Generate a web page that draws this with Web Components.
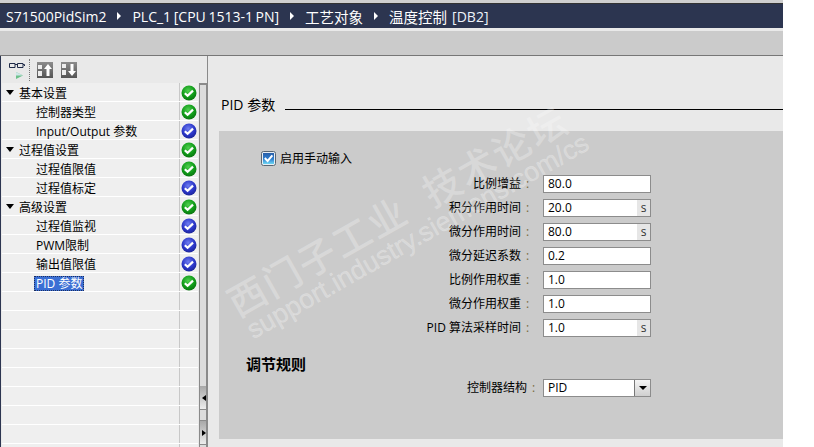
<!DOCTYPE html>
<html>
<head>
<meta charset="utf-8">
<style>
    html, body { margin: 0; padding: 0; background: #fff; }
    body { font-family: "Open Sans", "Noto Sans CJK SC", sans-serif; font-size: 12px; color: #000; }
    tia-window { width: 783px; height: 447px; }
</style>
</head>
<body>
<tia-window></tia-window>

<script>
const cjk = '"Open Sans", "Noto Sans CJK SC", sans-serif';

class StatusIcon extends HTMLElement {
    connectedCallback() {
        const color = this.getAttribute('color') === 'blue'
            ? ['#6f7df0', '#2a35c8', '#1b2390']
            : ['#4fd04f', '#0f9a18', '#0b6e10'];
        const id = 'g' + color[1].slice(1);
        this.attachShadow({ mode: 'open' }).innerHTML = /* html */ `
        <style>
            :host { display: block; width: 16px; height: 16px; }
            svg { display: block; }
        </style>
        <svg width="16" height="16" viewBox="0 0 16 16">
            <defs>
                <radialGradient id="${id}" cx="45%" cy="35%" r="70%">
                    <stop offset="0" stop-color="${color[0]}"/>
                    <stop offset="0.6" stop-color="${color[1]}"/>
                    <stop offset="1" stop-color="${color[2]}"/>
                </radialGradient>
            </defs>
            <circle cx="8" cy="8" r="7.5" fill="url(#${id})"/>
            <path d="M3.8 8.2 L6.6 10.8 L12 5.6" fill="none" stroke="#fff" stroke-width="2.2"/>
        </svg>`;
    }
}
customElements.define('status-icon', StatusIcon);

class TreeRow extends HTMLElement {
    connectedCallback() {
        const level = this.getAttribute('level');
        const status = this.getAttribute('status');
        const selected = this.hasAttribute('selected');
        this.attachShadow({ mode: 'open' }).innerHTML = /* html */ `
        <style>
            :host { display: flex; height: 18px; border-bottom: 1px solid #fff; background: #efefef; }
            .name {
                width: 177px;
                display: flex;
                align-items: center;
                box-sizing: border-box;
                padding-left: ${level === '0' ? 4 : level === '1' ? 33 : 0}px;
                padding-top: 3px;
                line-height: 15px;
                white-space: nowrap;
            }
            .arrow {
                width: 0; height: 0;
                border-left: 4px solid transparent;
                border-right: 4px solid transparent;
                border-top: 5px solid #000;
                margin-right: 4px;
                margin-top: -3px;
            }
            .label { padding: 0 1px; }
            .selected {
                background: #3b6fd4;
                color: #fff;
                outline: 1px dotted #1c2f60;
                outline-offset: -1px;
                padding: 0 2px;
                margin-left: -1px;
            }
            .status {
                width: 19px;
                border-left: 1px solid #c8c8c8;
                box-sizing: border-box;
                padding: 2px 0 0 1px;
            }
        </style>
        <div class="name">
            ${level === '0' ? '<span class="arrow"></span>' : ''}
            <span class="label ${selected ? 'selected' : ''}"><slot></slot></span>
        </div>
        <div class="status">${status ? `<status-icon color="${status}"></status-icon>` : ''}</div>`;
    }
}
customElements.define('tree-row', TreeRow);

const treeRows = [
    ['0', 'green', '基本设置'],
    ['1', 'green', '控制器类型'],
    ['1', 'blue', 'Input/Output 参数'],
    ['0', 'green', '过程值设置'],
    ['1', 'green', '过程值限值'],
    ['1', 'blue', '过程值标定'],
    ['0', 'green', '高级设置'],
    ['1', 'blue', '过程值监视'],
    ['1', 'blue', 'PWM限制'],
    ['1', 'blue', '输出值限值'],
    ['1', 'green', 'PID 参数', true],
];

class SideTree extends HTMLElement {
    constructor() {
        super();
        const shadow = this.attachShadow({ mode: 'open' });
        shadow.innerHTML = /* html */ `
        <style>
            :host { display: flex; width: 206px; height: 364px; overflow: hidden; }
            .rows { width: 196px; margin-left: 1px; }
            .track {
                width: 7px;
                margin-left: 1px;
                box-sizing: content-box;
                border-left: 1px solid #8a8a8a;
                border-right: 1px solid #8a8a8a;
                border-top: 2px solid #8a8a8a;
                background: #dcdcdc;
                margin-right: 0;
            }
            .btn {
                height: 23px;
                background: linear-gradient(#a8a8a8, #ededed);
                border-bottom: 1px solid #8a8a8a;
                display: flex;
                align-items: center;
            }
            .btn i { display: block; width: 0; height: 0; border-top: 3px solid transparent; border-bottom: 3px solid transparent; margin-left: 2px; }
            .prev { margin-top: 301px; }
            .prev i { border-right: 4px solid #000; }
            .next { margin-top: 10px; border-top: 1px solid #8a8a8a; }
            .next i { border-left: 4px solid #000; }
        </style>
        <div class="rows"></div>
        <div class="track">
            <div class="btn prev"><i></i></div>
            <div class="btn next"><i></i></div>
        </div>`;

        const rows = shadow.querySelector('.rows');
        for (let i = 0; i < 20; i++) {
            const row = document.createElement('tree-row');
            const item = treeRows[i];
            row.setAttribute('level', item ? item[0] : '2');
            if (item) {
                row.setAttribute('status', item[1]);
                row.textContent = item[2];
                if (item[3]) row.setAttribute('selected', '');
            }
            rows.appendChild(row);
        }
    }
}
customElements.define('side-tree', SideTree);

class FormField extends HTMLElement {
    connectedCallback() {
        const unit = this.getAttribute('unit');
        const value = this.getAttribute('value');
        const kind = this.getAttribute('kind');
        const isSelect = kind === 'select';
        this.attachShadow({ mode: 'open' }).innerHTML = /* html */ `
        <style>
            :host { display: flex; height: 18px; margin-bottom: 6px; line-height: 18px; }
            .label { width: ${isSelect ? 308 : 302}px; text-align: right; white-space: nowrap; }
            .colon { width: ${isSelect ? 16 : 22}px; padding-left: 5px; box-sizing: border-box; color: #7a6a40; }
            .box {
                width: 108px;
                height: 18px;
                box-sizing: border-box;
                background: #fff;
                border: 1px solid #8c8c8c;
                display: flex;
                line-height: 16px;
            }
            .value { flex: 1; padding-left: 4px; }
            .unit { width: 13px; background: #e6e6e6; text-align: center; color: #333; }
            .drop {
                width: 15px;
                border-left: 1px solid #777;
                background: linear-gradient(#f4f4f4, #cfcfcf);
                display: flex;
                align-items: center;
                justify-content: center;
            }
            .drop i { display: block; width: 0; height: 0; border-left: 4px solid transparent; border-right: 4px solid transparent; border-top: 4px solid #000; }
        </style>
        <div class="label"><slot></slot></div>
        <div class="colon">:</div>
        <div class="box">
            <div class="value">${value}</div>
            ${unit ? `<div class="unit">${unit}</div>` : ''}
            ${isSelect ? '<div class="drop"><i></i></div>' : ''}
        </div>`;
    }
}
customElements.define('form-field', FormField);

class CheckField extends HTMLElement {
    constructor() {
        super();
        this.attachShadow({ mode: 'open' }).innerHTML = /* html */ `
        <style>
            :host { display: flex; align-items: center; gap: 4px; height: 15px; margin-left: 42px; line-height: 15px; }
            svg { display: block; }
        </style>
        <svg width="15" height="15" viewBox="0 0 15 15">
            <defs>
                <linearGradient id="fill" x1="0" y1="0" x2="0" y2="1">
                    <stop offset="0" stop-color="#2a5fa8"/>
                    <stop offset="0.55" stop-color="#2f7fd0"/>
                    <stop offset="1" stop-color="#6fd8f4"/>
                </linearGradient>
            </defs>
            <rect x="0.5" y="0.5" width="14" height="14" rx="2" fill="#e8eef4" stroke="#5a6672"/>
            <rect x="2" y="2" width="11" height="11" fill="url(#fill)"/>
            <path d="M3.8 7 L6.6 10 L11.4 4.4" fill="none" stroke="#fff" stroke-width="2"/>
        </svg>
        <span><slot></slot></span>`;
    }
}
customElements.define('check-field', CheckField);

class PidPanel extends HTMLElement {
    constructor() {
        super();
        this.attachShadow({ mode: 'open' }).innerHTML = /* html */ `
        <style>
            :host { display: block; width: 565px; height: 308px; margin-left: 11px; background: #cbcbcb; box-sizing: border-box; padding-top: 20px; }
            .fields { margin-top: 9px; }
            h3 { margin: 18px 0 6px 27px; font-size: 15px; line-height: 18px; height: 18px; font-weight: 700; }
        </style>
        <check-field>启用手动输入</check-field>
        <div class="fields">
            <form-field value="80.0">比例增益</form-field>
            <form-field value="20.0" unit="s">积分作用时间</form-field>
            <form-field value="80.0" unit="s">微分作用时间</form-field>
            <form-field value="0.2">微分延迟系数</form-field>
            <form-field value="1.0">比例作用权重</form-field>
            <form-field value="1.0">微分作用权重</form-field>
            <form-field value="1.0" unit="s">PID 算法采样时间</form-field>
        </div>
        <h3>调节规则</h3>
        <form-field value="PID" kind="select">控制器结构</form-field>`;
    }
}
customElements.define('pid-panel', PidPanel);

class WaterMark extends HTMLElement {
    constructor() {
        super();
        this.attachShadow({ mode: 'open' }).innerHTML = /* html */ `
        <style>
            :host { position: absolute; left: 220px; top: 287px; transform: rotate(-29.5deg); transform-origin: 0 0; pointer-events: none; white-space: nowrap; color: rgba(255,255,255,0.27); }
            .cn { font-size: 38px; line-height: 42px; letter-spacing: 2px; font-weight: 500; }
            .en { font-size: 26.8px; line-height: 28px; margin: -3px 0 0 3px; font-family: "Liberation Sans", sans-serif; -webkit-text-stroke: 0.4px rgba(255,255,255,0.27); }
        </style>
        <div class="cn">西门子工业&nbsp;&nbsp;技术论坛</div>
        <div class="en">support.industry.siemens.com/cs</div>`;
    }
}
customElements.define('water-mark', WaterMark);

class TiaWindow extends HTMLElement {
    constructor() {
        super();
        const sep = '<svg class="sep" width="4" height="8" viewBox="0 0 4 8"><path d="M0 0 L4 4 L0 8 Z" fill="#fff"/></svg>';
        this.attachShadow({ mode: 'open' }).innerHTML = /* html */ `
        <style>
            :host { display: block; position: relative; overflow: hidden; background: #e9e9e9; font-family: ${cjk}; font-size: 12px; color: #000; }
            .strip { height: 3px; background: #cfcfcf; border-bottom: 1px solid #333; }
            .crumbs {
                height: 24px;
                background: #2c3550;
                color: #fff;
                display: flex;
                align-items: center;
                padding-left: 6px;
                font-size: 14px;
                white-space: nowrap;
            }
            .crumbs .tight { word-spacing: -1px; }
            .crumbs .cn { font-size: 14.5px; }
            .crumbs .db { margin-left: 5px; color: #eef3fa; font-size: 14px; }
            .sep { margin: 0 11px; }
            .band { height: 24px; margin-top: 3px; background: #cbcbcb; border-bottom: 1px solid #777; }
            .body { display: flex; border-left: 1px solid #2c3550; height: 391px; }
            .side { width: 206px; }
            .tools { height: 27px; display: flex; align-items: center; padding-left: 7px; box-sizing: border-box; }
            .tools svg { display: block; }
            .dots { width: 0; height: 22px; border-left: 1px dotted #777; margin: 0 7px 0 4px; }
            .main { flex: 1; border-left: 1px solid #8a8a8a; }
            .title { display: flex; height: 75px; box-sizing: border-box; padding: 40px 0 0 13px; line-height: 18px; font-size: 14px; }
            .title hr { flex: 1; height: 1px; margin: 13px 0 0 10px; border: 0; background: #000; }
        </style>
        <div class="strip"></div>
        <div class="crumbs">
            <span>S71500PidSim2</span>${sep}<span class="tight">PLC_1 [CPU 1513-1 PN]</span>${sep}<span class="cn">工艺对象</span>${sep}<span class="cn">温度控制</span><span class="db">[DB2]</span>
        </div>
        <div class="band"></div>
        <div class="body">
            <div class="side">
                <div class="tools">
                    <svg width="17" height="18" viewBox="0 0 17 18">
                        <path d="M1.5 2.5 H7 V6.5 H1.5 Z M9.5 2.5 H15 V6.5 H9.5 Z M7 3.5 H9.5 M15 3.5 H16.5 V5" fill="none" stroke="#1f2a48" stroke-width="1"/>
                        <path d="M8 11 L15 14.5 L8 18 Z" fill="#6cc08a"/>
                        <path d="M8 11 L15 14.5 H8 Z" fill="#cfe6e8"/>
                    </svg>
                    <span class="dots"></span>
                    <svg width="16" height="16" viewBox="0 0 16 16">
                        <defs><linearGradient id="up" x1="0" y1="0" x2="0" y2="1"><stop offset="0" stop-color="#8c8c8c"/><stop offset="1" stop-color="#555"/></linearGradient></defs>
                        <rect width="16" height="16" fill="url(#up)"/>
                        <rect x="1" y="3" width="4" height="4" fill="#eee"/><rect x="1" y="9" width="4" height="5" fill="#eee"/>
                        <path d="M11 2 L15 7 H12.5 V14 H9.5 V7 H7 Z" fill="#fff"/>
                    </svg>
                    <svg style="margin-left:8px" width="16" height="16" viewBox="0 0 16 16">
                        <rect width="16" height="16" fill="url(#up)"/>
                        <rect x="1" y="2" width="4" height="4" fill="#eee"/><rect x="1" y="8" width="4" height="5" fill="#eee"/>
                        <path d="M11 14 L15 9 H12.5 V2 H9.5 V9 H7 Z" fill="#fff"/>
                    </svg>
                </div>
                <side-tree></side-tree>
            </div>
            <div class="main">
                <div class="title"><span>PID 参数</span><hr></div>
                <pid-panel></pid-panel>
            </div>
        </div>
        <water-mark></water-mark>`;
    }
}
customElements.define('tia-window', TiaWindow);
</script>
</body>
</html>
